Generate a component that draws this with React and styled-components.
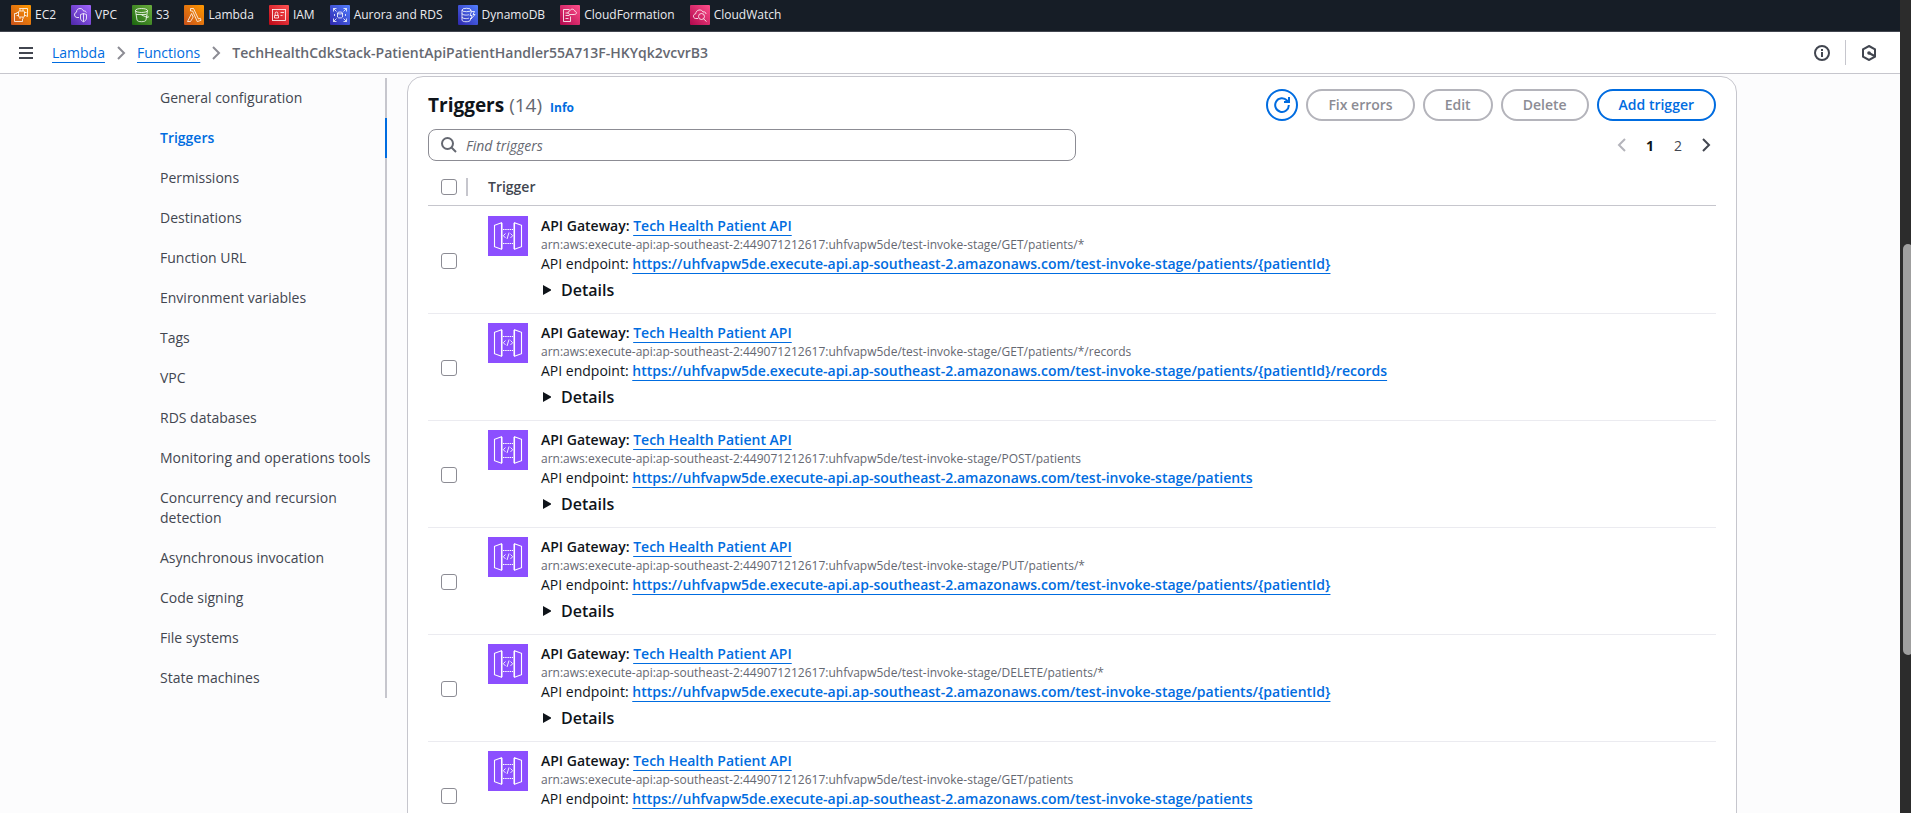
import React from 'react';
import styled, { createGlobalStyle, css } from 'styled-components';

const GlobalStyle = createGlobalStyle`
  *, *::before, *::after { box-sizing: border-box; }
  body { margin: 0; overflow: hidden; background: #fcfcfd; }
  body, button, input { font-family: "Open Sans", "Noto Sans", sans-serif; }
  button { cursor: pointer; }
`;

const Shell = styled.div`
  display: flex;
  height: 100vh;
  color: #0f141a;
  font-size: 14px;
  line-height: 20px;
`;

const Page = styled.div`
  flex: 1;
  min-width: 0;
  display: flex;
  flex-direction: column;
`;

const ScrollTrack = styled.div`
  flex: none;
  width: 11px;
  padding-left: 3px;
  background: #2c2c2c;
  overflow: hidden;
`;

const ScrollThumb = styled.div`
  width: 10px;
  height: 411px;
  margin-top: 244px;
  border-radius: 5px;
  background: #9f9f9f;
`;

const ServiceBar = styled.nav`
  flex: none;
  display: flex;
  align-items: center;
  gap: 15px;
  height: 32px;
  padding: 0 11px 1px;
  background: #161d26;
  border-bottom: 1px solid #424650;
`;

const ServiceLink = styled.a`
  display: flex;
  align-items: center;
  gap: 4px;
  color: #ebebf0;
  font-size: 12px;
  font-weight: 400;
  line-height: 20px;
  text-decoration: none;
  white-space: nowrap;
`;

const Crumbs = styled.header`
  flex: none;
  display: flex;
  align-items: center;
  justify-content: space-between;
  height: 42px;
  padding: 0 23px 0 18px;
  background: #fff;
  border-bottom: 1px solid #c6c6cd;
`;

const CrumbTrail = styled.div`
  display: flex;
  align-items: center;
  gap: 8px;
`;

const IconButton = styled.button`
  display: flex;
  align-items: center;
  justify-content: center;
  padding: 0;
  border: 0;
  background: none;
  color: #424650;
`;

const MenuButton = styled(IconButton)`
  margin-right: 10px;
`;

const Link = styled.a`
  color: #006ce0;
  font-weight: ${(p) => (p.$bold ? 600 : 400)};
  text-decoration: underline;
  text-decoration-thickness: 1px;
  text-underline-offset: 4px;
  text-decoration-skip-ink: none;
`;

const CurrentCrumb = styled.span`
  color: #656871;
  font-weight: 600;
`;

const CrumbTools = styled.div`
  display: flex;
  align-items: center;
  gap: 15px;
`;

const ToolDivider = styled.span`
  width: 1px;
  height: 25px;
  background: #c6c6cd;
`;

const Main = styled.main`
  flex: 1;
  min-height: 0;
  overflow: hidden;
  display: grid;
  grid-template-columns: 247px minmax(0, 1fr);
  align-items: start;
  gap: 20px;
  padding: 2px 163px 0 140px;
`;

const SideNav = styled.nav`
  display: flex;
  flex-direction: column;
  margin-top: 2px;
`;

const SideLink = styled.a`
  padding: 10px 10px 10px 20px;
  border-right: 2px solid ${(p) => (p.$active ? '#006ce0' : '#c6c6cd')};
  color: ${(p) => (p.$active ? '#006ce0' : '#424650')};
  font-weight: ${(p) => (p.$active ? 600 : 400)};
  text-decoration: none;
`;

const Panel = styled.section`
  padding: 12px 20px 20px;
  border: 1px solid #c6c6cd;
  border-radius: 16px;
  background: #fff;
`;

const PanelRow = styled.div`
  display: flex;
  align-items: center;
  justify-content: space-between;
  margin-bottom: 8px;
`;

const TitleGroup = styled.div`
  display: flex;
  align-items: baseline;
  gap: 8px;
`;

const Title = styled.h2`
  margin: 0;
  font-size: 19px;
  font-weight: 700;
  line-height: 24px;
`;

const Count = styled.span`
  color: #656871;
  font-weight: 400;
`;

const InfoLink = styled.a`
  color: #006ce0;
  font-size: 12px;
  font-weight: 700;
  text-decoration: none;
`;

const Actions = styled.div`
  display: flex;
  gap: 8px;
`;

const ActionButton = styled.button`
  display: flex;
  align-items: center;
  justify-content: center;
  height: 32px;
  padding: 0 20px;
  border: 2px solid currentColor;
  border-radius: 16px;
  background: #fff;
  color: #006ce0;
  font-size: 14px;
  font-weight: 600;
  line-height: 20px;
  ${(p) => p.$round && css`
    width: 32px;
    padding: 0;
  `}
  &:disabled {
    color: #8c8c94;
    border-color: #b4b4bb;
    cursor: default;
  }
`;

const SearchBox = styled.label`
  display: flex;
  align-items: center;
  gap: 9px;
  flex: 0 1 648px;
  height: 32px;
  padding: 0 12px;
  border: 1px solid #8c8c94;
  border-radius: 8px;
  color: #656871;
`;

const SearchInput = styled.input`
  flex: 1;
  min-width: 0;
  padding: 0;
  border: 0;
  outline: 0;
  background: none;
  font-size: 14px;
  &::placeholder {
    color: #656871;
    font-style: italic;
    opacity: 1;
  }
`;

const Pager = styled.div`
  display: flex;
  margin-right: -4px;
`;

const PagerButton = styled(IconButton)`
  width: 28px;
  height: 28px;
  font-size: 14px;
  color: ${(p) => (p.$current ? '#0f141a' : '#424650')};
  font-weight: ${(p) => (p.$current ? 700 : 400)};
  &:disabled { color: #b4b4bb; }
`;

const Table = styled.table`
  width: 100%;
  border-collapse: separate;
  border-spacing: 0;
`;

const HeadCell = styled.th`
  height: 37px;
  padding: 0;
  border-bottom: 1px solid #c6c6cd;
  color: #424650;
  font-weight: 600;
  text-align: left;
`;

const SelectHead = styled(HeadCell)`
  width: 60px;
  padding-left: 13px;
`;

const HeadTools = styled.div`
  display: flex;
  align-items: center;
  gap: 9px;
`;

const ColumnDivider = styled.span`
  width: 2px;
  height: 18px;
  background: #c6c6cd;
`;

const Checkbox = styled.input`
  appearance: none;
  display: block;
  width: 16px;
  height: 16px;
  margin: 0;
  border: 1px solid #8c8c94;
  border-radius: 3px;
  background: #fff;
`;

const Row = styled.tr`
  &:first-child > td:last-child { padding-top: 10px; }
`;

const Cell = styled.td`
  padding: 9px 0 11px;
  border-bottom: 1px solid #ebebf0;
`;

const SelectCell = styled(Cell)`
  padding: 11px 0 9px 13px;
`;

const TriggerBody = styled.div`
  display: flex;
  align-items: flex-start;
  gap: 13px;
`;

const TriggerText = styled.div`
  min-width: 0;
`;

const Line = styled.div`
  font-weight: ${(p) => (p.$bold ? 600 : 400)};
`;

const Arn = styled.div`
  color: #656871;
  font-size: 12px;
  line-height: 18px;
`;

const DetailsButton = styled.button`
  display: flex;
  align-items: center;
  gap: 10px;
  margin-top: 4px;
  padding: 0 0 0 2px;
  border: 0;
  background: none;
  color: #0f141a;
  font-size: 16px;
  font-weight: 600;
  line-height: 24px;
`;

const Stroke = ({ size = 16, children, width = 2, ...rest }) => (
  <svg width={size} height={size} viewBox="0 0 16 16" fill="none" stroke="currentColor" strokeWidth={width} aria-hidden="true" {...rest}>
    {children}
  </svg>
);

const Chevron = ({ left, color }) => (
  <Stroke color={color}>
    <path d={left ? 'M11 2 5 8l6 6' : 'M5 2l6 6-6 6'} />
  </Stroke>
);

const GRADIENTS = {
  orange: ['#c8511b', '#ff9900'],
  purple: ['#4d27a8', '#a166ff'],
  green: ['#1b660f', '#6cae3e'],
  red: ['#bd0816', '#ff5252'],
  blue: ['#2e27ad', '#527fff'],
  pink: ['#b0084d', '#ff4f8b'],
};

const SERVICES = [
  { name: 'EC2', tone: 'orange', art: <><rect x="7.500" y="6" width="6" height="6" rx="1" /><path d="M9 4v2M12 4v2M9 12v2M12 12v2M5.500 7.500h2M5.500 10.500h2M13.500 7.500h2M13.500 10.500h2" /><path d="M6 8.500H3.500v8h8V14M8.500 4V3.500h8v8H15.500" /></> },
  { name: 'VPC', tone: 'purple', art: <><path d="M8 12.500H6a2.700 2.700 0 0 1-.5-5.300C5.500 4.500 7.300 3.500 9 3.500c2 0 3 1 3.600 2.600 1.600-.4 2.600.6 2.700 1.400" /><path d="M9.500 9.500l3-1 3 1V13c0 1.800-1.200 3-3 3.700-1.800-.7-3-1.900-3-3.700zM12.500 8.500v8" /></> },
  { name: 'S3', tone: 'green', art: <><ellipse cx="9.500" cy="5.500" rx="6" ry="2" /><path d="M3.500 5.500 5 15c.2 1 2 1.700 4.500 1.700S13.800 16 14 15l1.500-9.500M9.500 10l5.500 2.300c1.800.6 2-.6.2-1.600M4.200 9.500h10" /></> },
  { name: 'Lambda', tone: 'orange', art: <path d="M6.500 3.500h3l5 10.500 1.800-.7.7 2-3.700 1.300L8.600 6H6.500zM7.600 8.500 3.500 16.500h3L9.200 12z" /> },
  { name: 'IAM', tone: 'red', art: <><rect x="3.500" y="4.500" width="13" height="11" /><path d="M5.500 13v-2.500h4V13zM6.200 10.500V8.300a1.300 1.300 0 0 1 2.600 0v2.200M11.500 7.500H15M11.500 10.500h2" /></> },
  { name: 'Aurora and RDS', tone: 'blue', art: <><path d="M6.500 3.500h-3v3M3.500 3.500l3 3M13.500 3.500h3v3M16.500 3.500l-3 3M6.500 16.500h-3v-3M3.500 16.500l3-3M13.500 16.500h3v-3M16.500 16.500l-3-3" /><ellipse cx="10" cy="8" rx="2.500" ry="1" /><path d="M7.500 8v4c0 1.300 5 1.300 5 0V8M4.500 9v2M15.500 9v2" /></> },
  { name: 'DynamoDB', tone: 'blue', art: <><ellipse cx="8.500" cy="5" rx="4.500" ry="1.700" /><path d="M4 5v10c0 2.300 8 2.300 8.500 0v-2M4 8.500c0 1.800 6 2 7 1M4 12c0 1.800 6 2 7 1M13 5v2M13.500 6.500h3l-1.500 3h2l-4 4.500 1-3.500h-2z" /></> },
  { name: 'CloudFormation', tone: 'pink', art: <><path d="M9.500 4.500h-6v12h7v-5M5.500 8h3M5.500 10.500h4M5.500 13.500h3" /><path d="M10 9.500h4.500c2.500-.2 2.500-3 .3-3.300C14 3.500 10.500 3.500 9.800 6 7.500 6 7.500 9.300 10 9.500z" /></> },
  { name: 'CloudWatch', tone: 'pink', art: <><path d="M8 13.500H5.500c-3-.5-2.500-4.500.2-4.700.3-4.500 6-5 7.300-1.800 2-.5 3 .6 3 2" /><circle cx="11.500" cy="11.500" r="3" /><path d="m13.500 13.800 3 2.700" /></> },
];

const ServiceIcon = ({ tone, children }) => (
  <svg width="20" height="20" viewBox="0 0 20 20" aria-hidden="true">
    <defs>
      <linearGradient id={`tone-${tone}`} x1="0" y1="1" x2="1" y2="0">
        <stop offset="0" stopColor={GRADIENTS[tone][0]} />
        <stop offset="1" stopColor={GRADIENTS[tone][1]} />
      </linearGradient>
    </defs>
    <rect width="20" height="20" rx="1" fill={`url(#tone-${tone})`} />
    <g fill="none" stroke="#fff" strokeWidth=".8">{children}</g>
  </svg>
);

const GatewayArt = styled.svg`
  flex: none;
`;

const GatewayIcon = () => (
  <GatewayArt width="40" height="40" viewBox="0 0 40 40" fill="none" stroke="#fff" aria-hidden="true">
    <rect width="40" height="40" fill="#8c4fff" stroke="none" />
    <path d="M13.500 6.700 6.500 9.300v21.400l7 2.600zM26.500 6.700l7 2.600v21.400l-7 2.600z" strokeWidth="1.100" />
    <path d="M14.500 7v26M25.500 7v26" opacity=".5" />
    <path d="M15 13.500h10M15 27.500h10" strokeDasharray="1.500 .7" />
    <path d="m17.500 17.500-2.200 2.200 2.200 2.200M22.500 17.500l2.200 2.200-2.200 2.200M21 16.500l-2 6.500" strokeWidth=".9" />
  </GatewayArt>
);

const NAV = [
  'General configuration', 'Triggers', 'Permissions', 'Destinations', 'Function URL',
  'Environment variables', 'Tags', 'VPC', 'RDS databases', 'Monitoring and operations tools',
  'Concurrency and recursion detection', 'Asynchronous invocation', 'Code signing',
  'File systems', 'State machines',
];

const ARN = 'arn:aws:execute-api:ap-southeast-2:449071212617:uhfvapw5de/test-invoke-stage/';
const ENDPOINT = 'https://uhfvapw5de.execute-api.ap-southeast-2.amazonaws.com/test-invoke-stage/';

const TRIGGERS = [
  { method: 'GET/patients/*', path: 'patients/{patientId}' },
  { method: 'GET/patients/*/records', path: 'patients/{patientId}/records' },
  { method: 'POST/patients', path: 'patients' },
  { method: 'PUT/patients/*', path: 'patients/{patientId}' },
  { method: 'DELETE/patients/*', path: 'patients/{patientId}' },
  { method: 'GET/patients', path: 'patients' },
];

const TriggerRow = ({ method, path }) => (
  <Row>
    <SelectCell>
      <Checkbox type="checkbox" aria-label={`Select ${method}`} />
    </SelectCell>
    <Cell>
      <TriggerBody>
        <GatewayIcon />
        <TriggerText>
          <Line $bold>API Gateway: <Link $bold href="#api">Tech Health Patient API</Link></Line>
          <Arn>{ARN + method}</Arn>
          <Line>API endpoint: <Link $bold href="#endpoint">{ENDPOINT + path}</Link></Line>
          <DetailsButton type="button" aria-expanded="false">
            <svg width="8" height="10" viewBox="0 0 8 10" aria-hidden="true"><path d="M0 0 8 4.500v1L0 10z" fill="currentColor" /></svg>
            Details
          </DetailsButton>
        </TriggerText>
      </TriggerBody>
    </Cell>
  </Row>
);

export default function App() {
  return (
    <>
      <GlobalStyle />
      <Shell>
        <Page>
          <ServiceBar aria-label="Favourite services">
            {SERVICES.map((s) => (
              <ServiceLink key={s.name} href={`#${s.name}`}>
                <ServiceIcon tone={s.tone}>{s.art}</ServiceIcon>
                {s.name}
              </ServiceLink>
            ))}
          </ServiceBar>
          <Crumbs>
            <CrumbTrail>
              <MenuButton type="button" aria-label="Open navigation">
                <Stroke><path d="M1 3h14M1 8h14M1 13h14" /></Stroke>
              </MenuButton>
              <Link href="#lambda">Lambda</Link>
              <Chevron color="#8c8c94" />
              <Link href="#functions">Functions</Link>
              <Chevron color="#8c8c94" />
              <CurrentCrumb>TechHealthCdkStack-PatientApiPatientHandler55A713F-HKYqk2vcvrB3</CurrentCrumb>
            </CrumbTrail>
            <CrumbTools>
              <IconButton type="button" aria-label="Info">
                <Stroke><circle cx="8" cy="8" r="7" /><path d="M8 7v5M8 4v2" /></Stroke>
              </IconButton>
              <ToolDivider />
              <IconButton type="button" aria-label="Diagnostics">
                <Stroke>
                  <path d="M8 1 14 4.300v7.400L8 15l-6-3.300V4.300z" />
                  <path d="m8 8 5.500 3" />
                  <circle cx="8" cy="8" r="1.800" fill="currentColor" stroke="none" />
                </Stroke>
              </IconButton>
            </CrumbTools>
          </Crumbs>
          <Main>
            <SideNav aria-label="Configuration">
              {NAV.map((label) => (
                <SideLink key={label} href="#tab" $active={label === 'Triggers'}>{label}</SideLink>
              ))}
            </SideNav>
            <Panel>
              <PanelRow>
                <TitleGroup>
                  <Title>Triggers <Count>(14)</Count></Title>
                  <InfoLink href="#info">Info</InfoLink>
                </TitleGroup>
                <Actions>
                  <ActionButton type="button" $round aria-label="Refresh">
                    <Stroke><path d="M14.800 8A6.800 6.800 0 1 1 13 3.500L14.500 5M15 0v5h-5" /></Stroke>
                  </ActionButton>
                  <ActionButton type="button" disabled>Fix errors</ActionButton>
                  <ActionButton type="button" disabled>Edit</ActionButton>
                  <ActionButton type="button" disabled>Delete</ActionButton>
                  <ActionButton type="button">Add trigger</ActionButton>
                </Actions>
              </PanelRow>
              <PanelRow>
                <SearchBox>
                  <Stroke><circle cx="6.500" cy="6.500" r="5.500" /><path d="m10.500 10.500 4.500 4.500" /></Stroke>
                  <SearchInput type="text" placeholder="Find triggers" aria-label="Find triggers" />
                </SearchBox>
                <Pager>
                  <PagerButton type="button" disabled aria-label="Previous page"><Chevron left /></PagerButton>
                  <PagerButton type="button" $current>1</PagerButton>
                  <PagerButton type="button">2</PagerButton>
                  <PagerButton type="button" aria-label="Next page"><Chevron /></PagerButton>
                </Pager>
              </PanelRow>
              <Table>
                <thead>
                  <tr>
                    <SelectHead>
                      <HeadTools>
                        <Checkbox type="checkbox" aria-label="Select all triggers" />
                        <ColumnDivider />
                      </HeadTools>
                    </SelectHead>
                    <HeadCell scope="col">Trigger</HeadCell>
                  </tr>
                </thead>
                <tbody>
                  {TRIGGERS.map((t) => <TriggerRow key={t.method} {...t} />)}
                </tbody>
              </Table>
            </Panel>
          </Main>
        </Page>
        <ScrollTrack aria-hidden="true"><ScrollThumb /></ScrollTrack>
      </Shell>
    </>
  );
}
